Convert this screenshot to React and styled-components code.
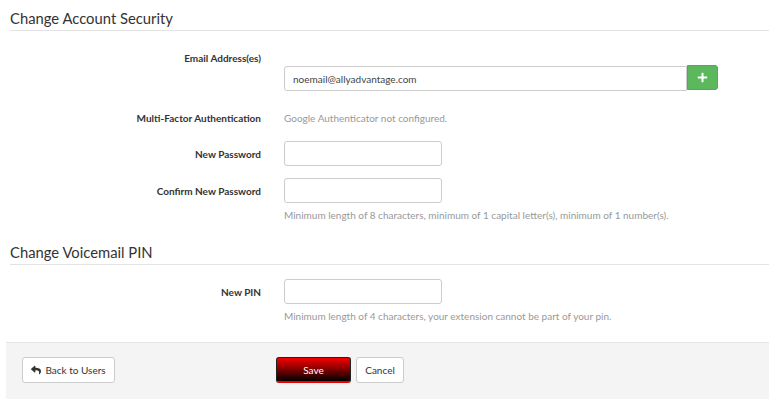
import React from 'react'
import styled, { createGlobalStyle } from 'styled-components'
import { FaPlus, FaReply } from 'react-icons/fa'

const GlobalStyle = createGlobalStyle`
    body {
        margin: 0;
        background: #fff;
        font-family: Lato, "Liberation Sans", sans-serif;
        color: #333;
    }
`

const App = () => {
  return (
    <Page>
        <GlobalStyle />
        <Content>
            <SectionTitle>Change Account Security</SectionTitle>
            <Row $top={19}>
                <Label>Email Address(es)</Label>
                <Control $offset={16}>
                    <InputGroup>
                        <Input $wide defaultValue="noemail@allyadvantage.com" />
                        <AddButton type="button"><FaPlus /></AddButton>
                    </InputGroup>
                </Control>
            </Row>
            <Row $top={19}>
                <Label>Multi-Factor Authentication</Label>
                <Control>
                    <Static>Google Authenticator not configured.</Static>
                </Control>
            </Row>
            <Row $top={15}>
                <Label $middle>New Password</Label>
                <Control>
                    <Input type="password" />
                </Control>
            </Row>
            <Row $top={12}>
                <Label $middle>Confirm New Password</Label>
                <Control>
                    <Input type="password" />
                    <Help>Minimum length of 8 characters, minimum of 1 capital letter(s), minimum of 1 number(s).</Help>
                </Control>
            </Row>

            <SectionTitle $gap={11}>Change Voicemail PIN</SectionTitle>
            <Row $top={14}>
                <Label $middle>New PIN</Label>
                <Control>
                    <Input type="password" />
                    <Help>Minimum length of 4 characters, your extension cannot be part of your pin.</Help>
                </Control>
            </Row>
        </Content>
        <Footer>
            <BackButton type="button"><FaReply />Back to Users</BackButton>
            <Actions>
                <SaveButton type="button">Save</SaveButton>
                <PlainButton type="button">Cancel</PlainButton>
            </Actions>
        </Footer>
    </Page>
  )
}

export default App

const Page = styled.div`
    width: 769px;
    min-height: 399px;
    display: flex;
    flex-direction: column;
`
const Content = styled.div`
    padding-left: 10px;
`
const SectionTitle = styled.h3`
    margin: ${p => p.$gap || 0}px 0 0;
    height: 30px;
    font-size: 14.8px;
    font-weight: 400;
    line-height: 36px;
    color: #333;
    border-bottom: 1px solid #e3e3e3;
    box-sizing: content-box;
`
const Row = styled.div`
    display: grid;
    grid-template-columns: 251px 1fr;
    column-gap: 23px;
    margin-top: ${p => p.$top}px;
`
const Label = styled.div`
    text-align: right;
    font-size: 10px;
    font-weight: 700;
    line-height: 16px;
    padding-top: ${p => (p.$middle ? 5 : 0)}px;
    color: #333;
`
const Control = styled.div`
    padding-top: ${p => p.$offset || 0}px;
    display: flex;
    flex-direction: column;
    align-items: flex-start;
`
const InputGroup = styled.div`
    display: flex;
    width: 434px;
`
const Input = styled.input`
    box-sizing: border-box;
    width: ${p => (p.$wide ? '403px' : '158px')};
    height: 25px;
    padding: 0 8px;
    border: 1px solid #ccc;
    border-radius: ${p => (p.$wide ? '3px 0 0 3px' : '3px')};
    font-family: Lato, "Liberation Sans", sans-serif;
    font-size: 10px;
    color: #444;
    outline: none;
`
const AddButton = styled.button`
    box-sizing: border-box;
    width: 31px;
    height: 25px;
    margin-top: -1px;
    border: 1px solid #4cae4c;
    border-radius: 0 3px 3px 0;
    background: #5cb85c;
    color: #fff;
    display: flex;
    align-items: center;
    justify-content: center;
    padding: 0;
    svg {
        width: 11px;
        height: 11px;
    }
`
const Static = styled.div`
    font-size: 10px;
    line-height: 16px;
    color: #999;
`
const Help = styled.div`
    margin-top: 4px;
    font-size: 10px;
    line-height: 16px;
    color: #999;
`
const Footer = styled.div`
    margin: 18px 0 0 6px;
    flex: 1;
    background: #f4f4f4;
    border-top: 1px solid #e6e6e6;
    padding: 14px 0 0 16px;
    display: flex;
    align-items: flex-start;
`
const ButtonBase = styled.button`
    box-sizing: border-box;
    height: 26px;
    border: 1px solid #ccc;
    border-radius: 3px;
    background: #fff;
    color: #333;
    font-family: Lato, "Liberation Sans", sans-serif;
    font-size: 10px;
    white-space: nowrap;
    display: flex;
    align-items: center;
    justify-content: center;
    gap: 4px;
    padding: 0 4px;
`
const BackButton = styled(ButtonBase)`
    width: 93px;
    svg {
        width: 10px;
        height: 10px;
    }
`
const Actions = styled.div`
    margin-left: 161px;
    display: flex;
    gap: 5px;
`
const SaveButton = styled(ButtonBase)`
    width: 75px;
    color: #fff;
    border: 1px solid #222;
    border-bottom: 2px solid #e00;
    background: linear-gradient(to bottom, #f40000 0%, #800000 50%, #000 100%);
`
const PlainButton = styled(ButtonBase)`
    width: 48px;
`
